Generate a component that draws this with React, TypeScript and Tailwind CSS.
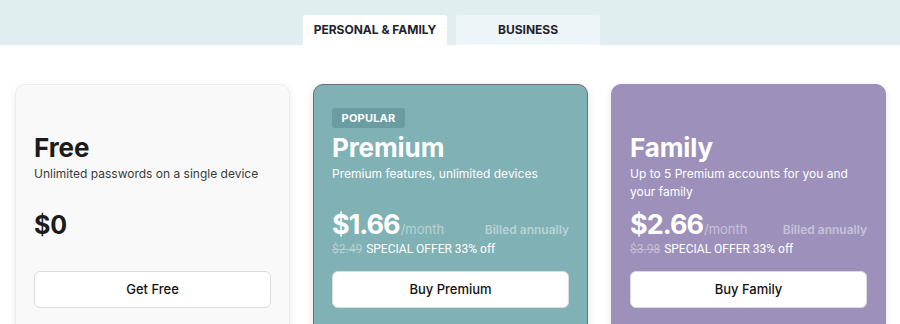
const font = { fontFamily: "Inter, 'Noto Sans', sans-serif" };

type Plan = {
  name: string;
  desc: string;
  price: string;
  old?: string;
  badge?: boolean;
  cta: string;
  card: string;
  muted: string;
  oldColor: string;
  dark?: boolean;
};

const plans: Plan[] = [
  {
    name: "Free",
    desc: "Unlimited passwords on a single device",
    price: "$0",
    cta: "Get Free",
    card: "bg-[#f9f9f9] border border-[#ececec] shadow-[0_2px_8px_rgba(0,0,0,0.08)]",
    muted: "",
    oldColor: "",
    dark: true,
  },
  {
    name: "Premium",
    desc: "Premium features, unlimited devices",
    price: "$1.66",
    old: "$2.49",
    badge: true,
    cta: "Buy Premium",
    card: "bg-[#80b1b5] border border-[#707070] shadow-[0_2px_8px_rgba(0,0,0,0.12)]",
    muted: "text-[#b9d3d5]",
    oldColor: "text-[#b3cfd1]",
  },
  {
    name: "Family",
    desc: "Up to 5 Premium accounts for you and your family",
    price: "$2.66",
    old: "$3.98",
    cta: "Buy Family",
    card: "bg-[#9d91bb] border border-[#9d91bb] shadow-[0_2px_8px_rgba(0,0,0,0.1)]",
    muted: "text-[#c8c1da]",
    oldColor: "text-[#c4bcd6]",
  },
];

function Card({ p }: { p: Plan }) {
  return (
    <div className={`flex-1 rounded-[10px] px-[18px] pt-[19px] pb-10 ${p.card}`}>
      <div className="h-[20px]">
        {p.badge && (
          <span className="inline-flex h-[20px] w-[73px] items-center justify-center rounded-[3px] bg-[#6a9ca1] text-[11px] font-bold tracking-[0.2px] text-white">
            POPULAR
          </span>
        )}
      </div>
      <div
        className={`mt-[9px] text-[26px] font-bold leading-[30px] tracking-[-0.1px] ${
          p.dark ? "text-[#1b1b1b]" : "text-white"
        }`}
      >
        {p.name}
      </div>
      <div
        className={`mt-[2px] h-[36px] pr-[8px] text-[12px] leading-[18px] ${
          p.dark ? "text-[#3a3a3a]" : "text-white"
        }`}
      >
        {p.desc}
      </div>
      <div className="mt-[7px] h-[58px]">
        {p.dark ? (
          <div className="text-[25px] font-bold leading-[34px] text-[#1b1b1b]">{p.price}</div>
        ) : (
          <>
            <div className="flex items-baseline">
              <span className="text-[27px] font-bold leading-[34px] tracking-[-1px] text-white">{p.price}</span>
              <span className={`ml-[1px] text-[13px] ${p.muted}`}>/month</span>
              <span className={`ml-auto text-[12px] font-semibold ${p.muted}`}>Billed annually</span>
            </div>
            <div
              className="mt-[-2px] flex items-baseline gap-[4px] text-[12px] leading-[18px] text-white"
              style={{ fontFamily: "Roboto, sans-serif" }}
            >
              <span className={`line-through ${p.oldColor}`}>{p.old}</span>
              <span>SPECIAL OFFER 33% off</span>
            </div>
          </>
        )}
      </div>
      <button className="mt-[5px] flex h-[37px] w-full items-center justify-center rounded-[6px] border border-[#dcdcdc] bg-white text-[13px] font-medium text-[#111]">
        {p.cta}
      </button>
    </div>
  );
}

export default function App() {
  return (
    <div className="h-[324px] w-[900px] overflow-hidden bg-white" style={font}>
      <div className="flex h-[45px] items-end justify-center gap-[9px] bg-[#e0eeef] pl-[3px]">
        <div className="flex h-[30px] w-[144px] items-center justify-center rounded-t-[3px] bg-white text-[12px] font-bold text-[#1f2430]">
          PERSONAL &amp; FAMILY
        </div>
        <div className="flex h-[30px] w-[144px] items-center justify-center rounded-t-[3px] bg-[#eef5f8] text-[12px] font-bold text-[#1f2430]">
          BUSINESS
        </div>
      </div>
      <div className="flex gap-[23px] pl-[15px] pr-[14px] pt-[39px]">
        {plans.map((p) => (
          <Card key={p.name} p={p} />
        ))}
      </div>
    </div>
  );
}
